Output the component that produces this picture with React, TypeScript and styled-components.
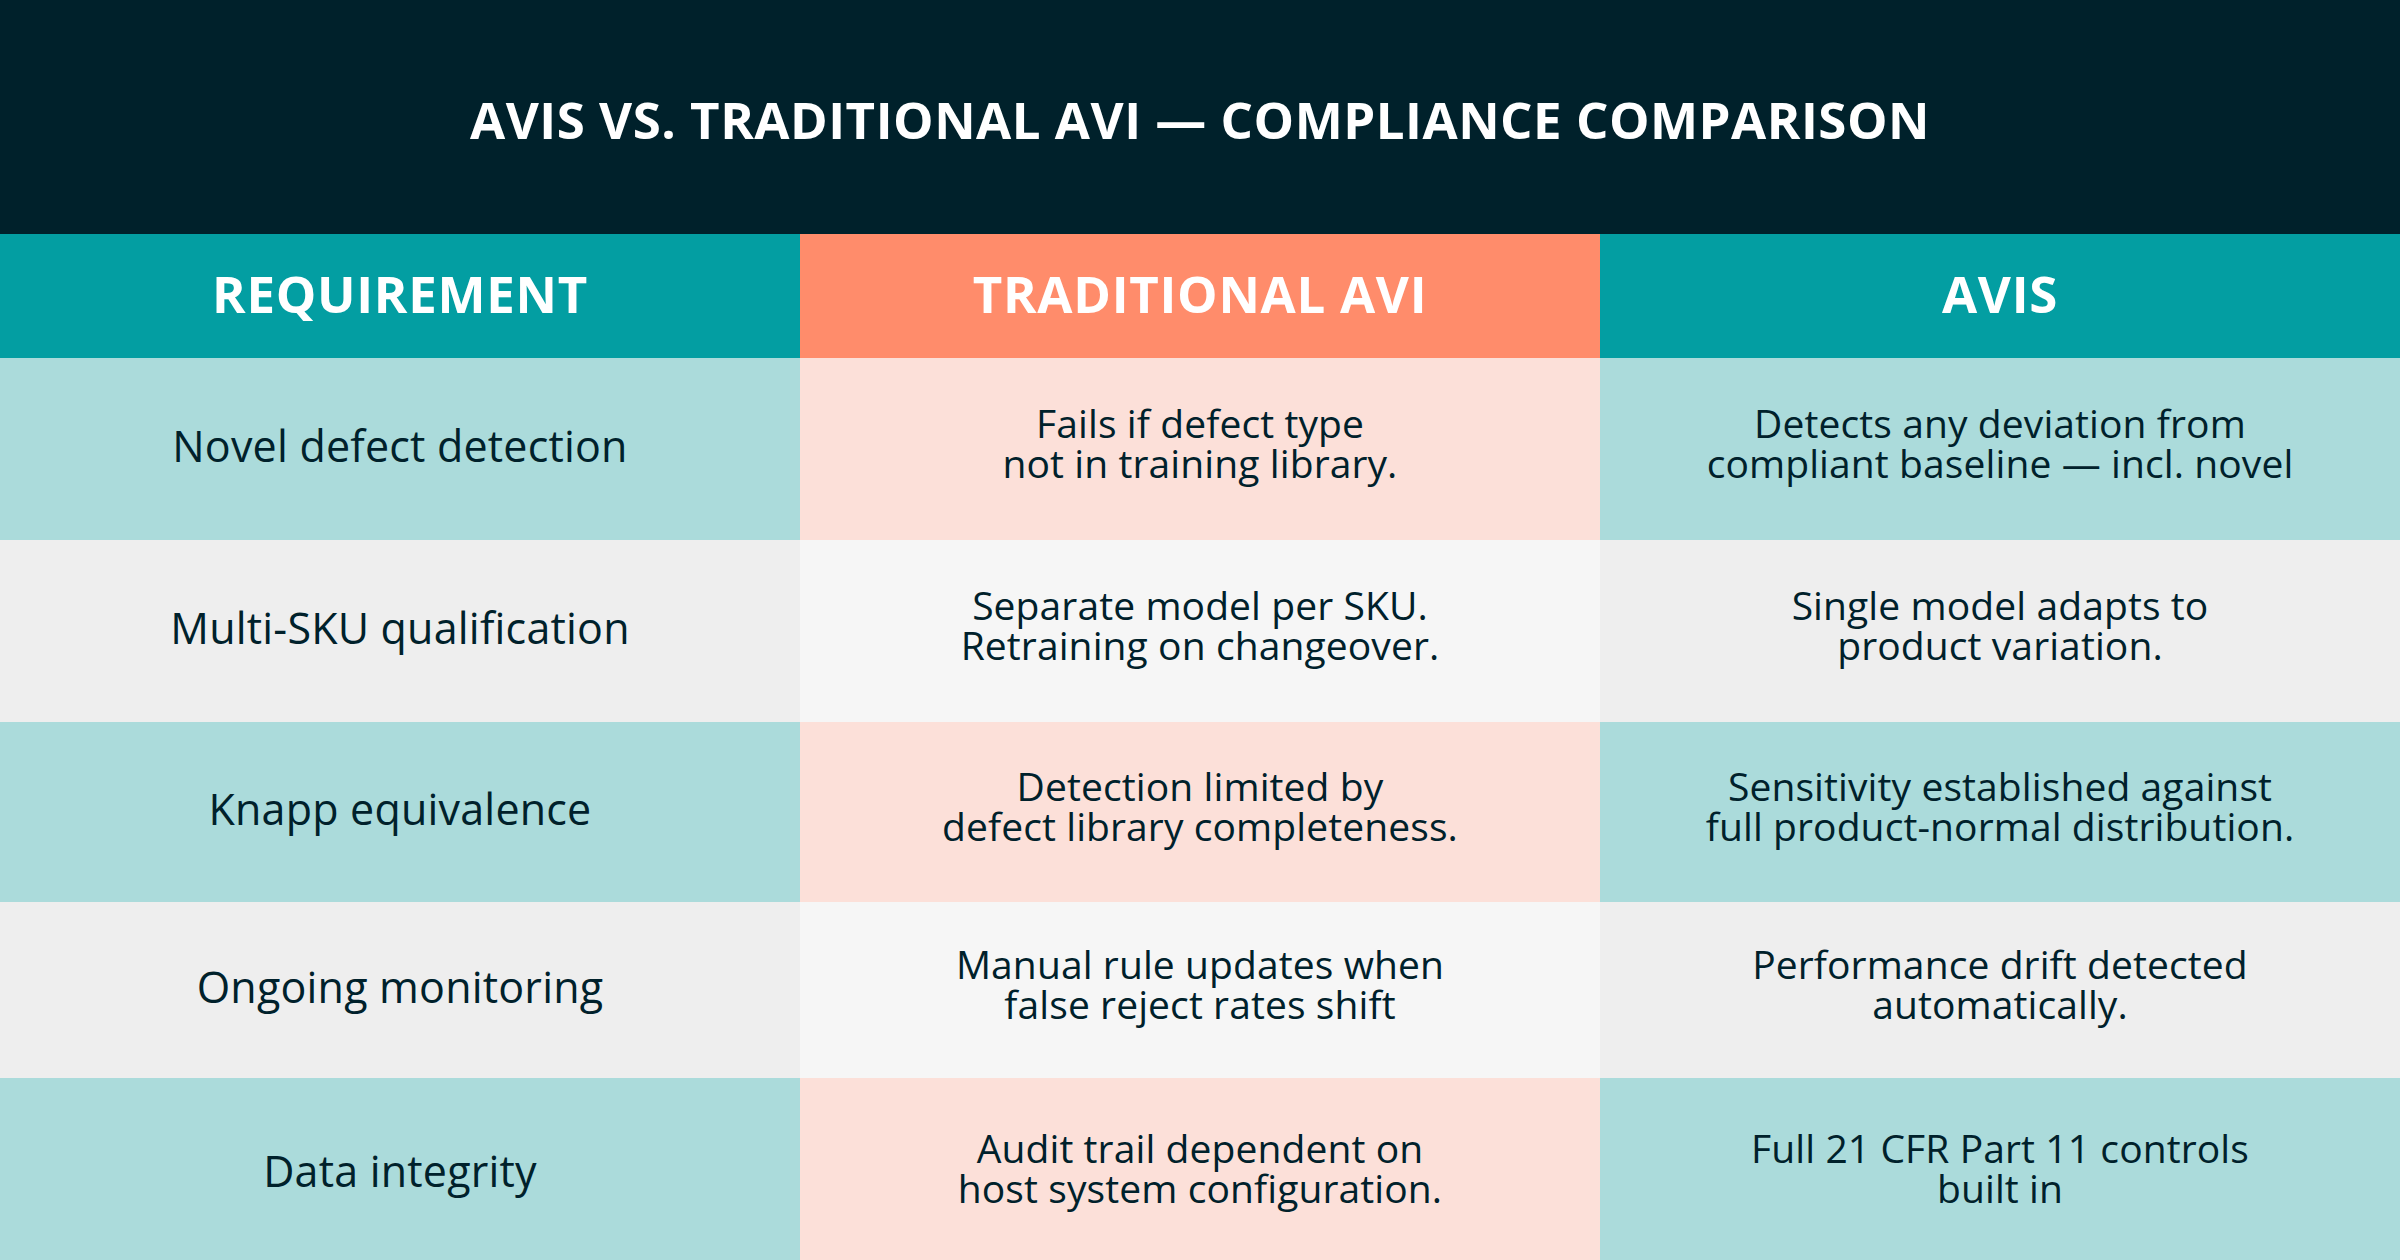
import React from "react";
import styled, { createGlobalStyle } from "styled-components";

const Global = createGlobalStyle`
  html, body { margin: 0; padding: 0; background: #00212b; }
  body { font-family: "Open Sans", "Noto Sans", sans-serif; }
`;

const Page = styled.div`
  width: 2400px;
  height: 1260px;
  display: flex;
  flex-direction: column;
  overflow: hidden;
  color: #00212b;
`;

const TitleBar = styled.header`
  height: 234px;
  flex-shrink: 0;
  background: #00212b;
  display: flex;
  align-items: center;
  justify-content: center;
`;

const Title = styled.h1`
  margin: 0;
  color: #ffffff;
  font-size: 51px;
  font-weight: 700;
  letter-spacing: 0.5px;
  text-transform: uppercase;
  padding-top: 4px;
`;

const Row = styled.div<{ $h: number }>`
  display: grid;
  grid-template-columns: 800px 800px 800px;
  height: ${(p) => p.$h}px;
  flex-shrink: 0;
`;

type Tone = "teal" | "orange" | "lteal" | "pink" | "gray" | "light";
const bg: Record<Tone, string> = {
  teal: "#039ea2",
  orange: "#ff8c6b",
  lteal: "#abdbdb",
  pink: "#fce0d9",
  gray: "#eeeeee",
  light: "#f6f6f6",
};

const HeadCell = styled.div<{ $tone: Tone }>`
  background: ${(p) => bg[p.$tone]};
  display: flex;
  align-items: center;
  justify-content: center;
  color: #ffffff;
  font-size: 51px;
  font-weight: 700;
  letter-spacing: 0.7px;
  padding-bottom: 6px;
`;

const Cell = styled.div<{ $tone: Tone; $lead?: boolean }>`
  background: ${(p) => bg[p.$tone]};
  display: flex;
  align-items: center;
  justify-content: center;
  text-align: center;
  font-size: ${(p) => (p.$lead ? 43 : 39)}px;
  line-height: 40px;
  white-space: pre-line;
  letter-spacing: ${(p) => (p.$lead ? 0.2 : 0.1)}px;
  padding-bottom: ${(p) => (p.$lead ? 6 : 12)}px;
`;

const rows: { h: number; odd: boolean; cells: [string, string, string] }[] = [
  {
    h: 182,
    odd: true,
    cells: [
      "Novel defect detection",
      "Fails if defect type\nnot in training library.",
      "Detects any deviation from\ncompliant baseline — incl. novel",
    ],
  },
  {
    h: 182,
    odd: false,
    cells: [
      "Multi-SKU qualification",
      "Separate model per SKU.\nRetraining on changeover.",
      "Single model adapts to\nproduct variation.",
    ],
  },
  {
    h: 180,
    odd: true,
    cells: [
      "Knapp equivalence",
      "Detection limited by\ndefect library completeness.",
      "Sensitivity established against\nfull product-normal distribution.",
    ],
  },
  {
    h: 176,
    odd: false,
    cells: [
      "Ongoing monitoring",
      "Manual rule updates when\nfalse reject rates shift",
      "Performance drift detected\nautomatically.",
    ],
  },
  {
    h: 192,
    odd: true,
    cells: [
      "Data integrity",
      "Audit trail dependent on\nhost system configuration.",
      "Full 21 CFR Part 11 controls\nbuilt in",
    ],
  },
];

export default function App() {
  return (
    <>
      <Global />
      <Page>
        <TitleBar>
          <Title>AVIS vs. Traditional AVI — Compliance Comparison</Title>
        </TitleBar>
        <Row $h={124}>
          <HeadCell $tone="teal">REQUIREMENT</HeadCell>
          <HeadCell $tone="orange">TRADITIONAL AVI</HeadCell>
          <HeadCell $tone="teal">AVIS</HeadCell>
        </Row>
        {rows.map((r, i) => (
          <Row key={i} $h={r.h}>
            <Cell $tone={r.odd ? "lteal" : "gray"} $lead>
              {r.cells[0]}
            </Cell>
            <Cell $tone={r.odd ? "pink" : "light"}>{r.cells[1]}</Cell>
            <Cell $tone={r.odd ? "lteal" : "gray"}>{r.cells[2]}</Cell>
          </Row>
        ))}
      </Page>
    </>
  );
}
